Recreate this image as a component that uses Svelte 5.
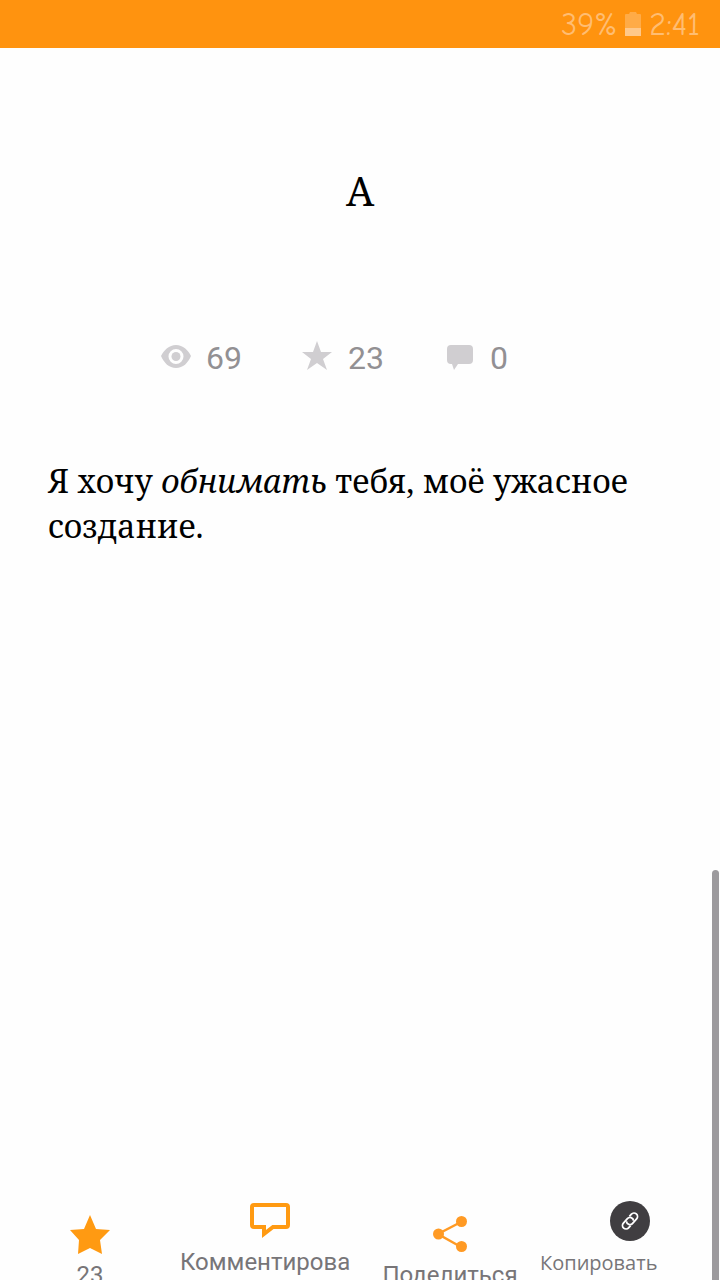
<script lang="ts">
	const battery = 39;
	const time = '2:41';

	const stats = { views: 69, likes: 23, comments: 0 };
</script>

<div class="screen">
	<header class="status">
		<span>{battery}%</span>
		<svg width="16" height="24" viewBox="0 0 16 24" aria-hidden="true">
			<path d="M0 3q0-1 1-1h3l1-2h6l1 2h3q1 0 1 1v21H0z" fill="#ffab47" />
			<path d="M0 16h16v8H0z" fill="#ffc88a" />
		</svg>
		<time>{time}</time>
	</header>

	<main>
		<h1>А</h1>

		<ul class="stats">
			<li>
				<svg width="32" height="32" viewBox="0 0 32 32" aria-label="Просмотры">
					<path
						fill-rule="evenodd"
						d="M16 5C9 5 4 10 1 16c3 7 8 12 15 12s12-5 15-12C28 10 23 5 16 5zm0 4a7.500 7.500 0 1 1 0 15 7.500 7.500 0 0 1 0-15z"
					/>
					<circle cx="16" cy="16.500" r="4.500" />
				</svg>
				<span>{stats.views}</span>
			</li>
			<li>
				<svg width="32" height="32" viewBox="0 0 32 32" aria-label="Голоса">
					<path d="M15 1l4 11h11l-9 7 4 11-10-7-10 7 4-11-9-7h11z" />
				</svg>
				<span>{stats.likes}</span>
			</li>
			<li>
				<svg width="32" height="32" viewBox="0 0 32 32" aria-label="Комментарии">
					<path d="M7 5h18q4 0 4 4v11q0 4-4 4H14l-4 6-2-6H7q-4 0-4-4V9q0-4 4-4z" />
				</svg>
				<span>{stats.comments}</span>
			</li>
		</ul>

		<p class="text">Я хочу <em>обнимать</em> тебя, моё ужасное создание.</p>
	</main>

	<footer class="actions">
		<button class="low">
			<svg width="40" height="40" viewBox="0 0 40 40" aria-hidden="true">
				<path d="M20 0l6 14 14 1-10 10 2 14-12-6-12 6 1-14L0 15l14-1z" fill="#ff9a12" />
			</svg>
			<span>{stats.likes}</span>
		</button>
		<button class="wide">
			<svg width="40" height="40" viewBox="0 0 40 40" aria-hidden="true">
				<path
					d="M4 4h32q2 0 2 2v18q0 2-2 2H23l-9 7v-7H4q-2 0-2-2V6q0-2 2-2z"
					fill="none"
					stroke="#ff9a12"
					stroke-width="4"
				/>
			</svg>
			<span>Комментирова</span>
		</button>
		<button class="low">
			<svg width="40" height="40" viewBox="0 0 40 40" aria-hidden="true">
				<path d="M31 7L8 19l23 13" fill="none" stroke="#ff9a24" stroke-width="2.500" />
				<g fill="#ff9a24">
					<circle cx="31.500" cy="6.500" r="5.500" />
					<circle cx="8.500" cy="19" r="5.500" />
					<circle cx="31.500" cy="31.500" r="5.500" />
				</g>
			</svg>
			<span>Поделиться</span>
		</button>
		<button class="wide copy">
			<svg width="40" height="40" viewBox="0 0 40 40" aria-hidden="true">
				<circle cx="20" cy="20" r="20" fill="#403e41" />
				<g transform="rotate(-48 20 20)" fill="none" stroke="#fff" stroke-width="1.800">
					<path d="M17 23.500h-3a3.500 3.500 0 0 1 0-7h6a3.500 3.500 0 0 1 2.500 6" />
					<path d="M23 16.500h3a3.500 3.500 0 0 1 0 7h-6a3.500 3.500 0 0 1-2.500-6" />
				</g>
			</svg>
			<span>Копировать</span>
		</button>
	</footer>

	<div class="scrollbar"></div>
</div>

<style>
	:global(body) {
		background: #fefefe;
	}

	.screen {
		position: relative;
		display: flex;
		flex-direction: column;
		min-height: 100vh;
		overflow: hidden;
		font-family: Roboto, sans-serif;
	}

	.status {
		display: flex;
		align-items: center;
		justify-content: flex-end;
		gap: 8px;
		height: 48px;
		padding: 0 20px;
		background: #ff930f;
		font-family: 'Comic Neue', 'Open Sans', sans-serif;
		font-size: 32px;
		color: #ffbd72;
	}

	main {
		flex: 1;
		padding: 111px 48px 0;
	}

	h1 {
		margin: 0;
		font-family: 'Noto Serif', 'DejaVu Serif', serif;
		font-size: 40px;
		font-weight: 400;
		line-height: 64px;
		text-align: center;
		color: #000;
	}

	.stats {
		display: flex;
		justify-content: center;
		gap: 60px;
		margin: 117px 0 0;
		padding: 0 52px 0 0;
		list-style: none;
	}

	.stats li {
		display: flex;
		align-items: flex-start;
		gap: 14px;
		font-size: 32px;
		line-height: 36px;
		color: #929093;
	}

	.stats svg {
		fill: #d0ced1;
	}

	.text {
		margin: 82px 0 0;
		font-family: 'Noto Serif', 'DejaVu Serif', serif;
		font-size: 32px;
		line-height: 45px;
		color: #000;
	}

	.actions {
		display: grid;
		grid-template-columns: repeat(4, 1fr);
		height: 79px;
		overflow: hidden;
	}

	.actions button {
		display: flex;
		flex-direction: column;
		align-items: center;
		justify-content: flex-start;
		gap: 6px;
		min-width: 0;
		height: 80px;
		padding: 0;
		border: 0;
		background: none;
		font-family: Roboto, sans-serif;
		font-size: 24px;
		line-height: 30px;
		color: #777578;
	}

	.actions svg {
		flex: none;
	}

	.actions .low {
		gap: 5px;
		padding-top: 14px;
	}

	.actions .copy {
		gap: 8px;
		font-family: 'Comic Neue', 'Open Sans', sans-serif;
		font-size: 20px;
	}

	.wide span {
		align-self: flex-start;
	}

	.scrollbar {
		position: absolute;
		top: 68%;
		right: 1px;
		bottom: 0;
		width: 7px;
		border-radius: 4px 4px 0 0;
		background: #9c9a9d;
	}
</style>
